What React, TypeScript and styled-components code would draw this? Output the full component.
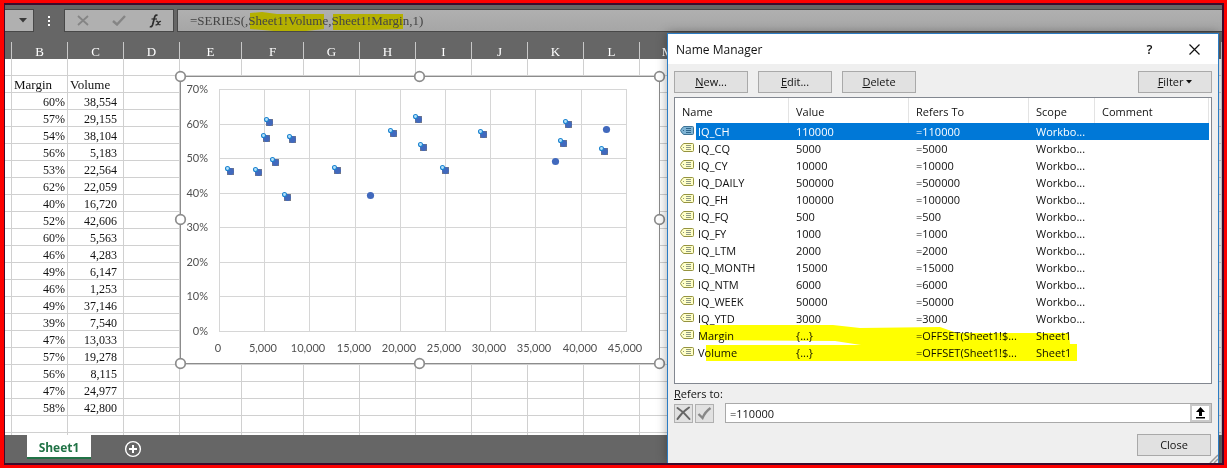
import React, { useState } from "react";
import styled, { createGlobalStyle } from "styled-components";

const ui = `"Open Sans", "Noto Sans", sans-serif`;
const serif = `"Liberation Serif", "Times New Roman", serif`;

const GlobalStyle = createGlobalStyle`
  *, *::before, *::after { box-sizing: border-box; }
  body { margin: 0; background: #fd0000; }
  button, input { font: inherit; color: inherit; margin: 0; }
`;

const Frame = styled.div`
  min-height: 100vh;
  border: solid #fd0000;
  border-width: 3px 3px 3px 4px;
  display: flex;
`;

const Workbook = styled.main`
  position: relative;
  flex: 1;
  min-width: 0;
  display: flex;
  flex-direction: column;
  overflow: hidden;
  border: solid #3d0a2c;
  border-width: 2px 2px 2px 1px;
  background: #666;
`;

const FormulaBar = styled.div`
  display: flex;
  align-items: stretch;
  height: 37px;
  padding: 4px 0 10px;
`;

const BarBox = styled.div`
  display: flex;
  align-items: center;
  border: 1px solid #484848;
  background: #b0b0b0;
`;

const NameBox = styled(BarBox)`
  width: 29px;
  border-left: 0;
`;

const BarButton = styled.button`
  flex: 1;
  display: flex;
  align-items: center;
  justify-content: center;
  height: 100%;
  padding: 0;
  border: 0;
  background: none;
`;

const NameBoxButton = styled(BarButton)`
  justify-content: flex-end;
  padding-right: 6px;
`;

const Dots = styled.div`
  width: 30px;
  display: flex;
  align-items: center;
  justify-content: center;
`;

const Tools = styled(BarBox)`
  width: 110px;
  margin-right: 3px;
`;

const FormulaField = styled(BarBox)`
  position: relative;
  flex: 1;
  border-right: 0;
  background: linear-gradient(#b0b0b0, #a6a6a6);
`;

const FormulaMarks = styled.svg`
  position: absolute;
  left: 0;
  top: 0;
  pointer-events: none;
`;

const FormulaInput = styled.input`
  position: relative;
  width: 100%;
  height: 100%;
  padding: 0 12px;
  border: 0;
  outline: 0;
  background: none;
  color: #444;
  font-family: ${serif};
  font-size: 13px;
`;

const Sheet = styled.section`
  position: relative;
  flex: 1;
  overflow: hidden;
  background: #fff;
`;

const Grid = styled.table`
  width: 100%;
  table-layout: fixed;
  border-collapse: separate;
  border-spacing: 0;
  font-family: ${serif};
  font-size: 12px;
  line-height: 14px;
  color: #111;
`;

const Col = styled.col<{ $w?: number }>`
  width: ${(p) => (p.$w ? `${p.$w}px` : "auto")};
`;

const Letter = styled.th`
  height: 17px;
  padding: 2px 0 0;
  border-right: 1px solid #c8c8c8;
  background: #666;
  color: #fff;
  font-size: 13px;
  font-weight: 400;
  line-height: 15px;
  text-align: center;
`;

const Cell = styled.td<{ $pad?: number; $head?: boolean }>`
  height: 17px;
  padding: 2px ${(p) => p.$pad ?? 2}px 0 2px;
  border: solid #d0d0d0;
  border-width: 0 1px 1px 0;
  font-size: ${(p) => (p.$head ? 13 : 12)}px;
  text-align: ${(p) => (p.$head ? "left" : "right")};
  white-space: nowrap;
`;

const CutCell = styled.td`
  height: 2px;
  padding: 0;
  border-right: 1px solid #d0d0d0;
`;

const ChartSvg = styled.svg`
  position: absolute;
  left: 169px;
  top: 28px;
  font-family: Lato, sans-serif;
  font-size: 11px;
  fill: #505050;
`;

const TabBar = styled.nav`
  display: flex;
  align-items: flex-start;
  height: 28px;
  padding-left: 22px;
  gap: 33px;
`;

const SheetTab = styled.button`
  width: 64px;
  height: 24px;
  padding: 3px 0 0;
  border: 0;
  border-bottom: 2px solid #217346;
  background: #fff;
  color: #217346;
  font: 700 12px/19px ${ui};
`;

const AddSheet = styled.button`
  display: flex;
  padding: 5px 0;
  border: 0;
  background: none;
`;

const Dialog = styled.section`
  position: absolute;
  right: 3px;
  top: 28px;
  bottom: 0;
  width: 552px;
  display: flex;
  flex-direction: column;
  border: solid #2b7cc4;
  border-width: 1px 1px 0;
  background: #efefef;
  box-shadow: 0 0 10px rgba(0, 0, 0, 0.35);
  font-family: ${ui};
  font-size: 11px;
  color: #111;
`;

const TitleBar = styled.header`
  display: flex;
  align-items: center;
  height: 30px;
  padding: 0 16px 0 8px;
  background: #fff;
`;

const Title = styled.h1`
  flex: 1;
  margin: 0;
  font-size: 12px;
  font-weight: 400;
`;

const TitleButton = styled.button`
  display: flex;
  align-items: center;
  justify-content: center;
  width: 15px;
  height: 20px;
  margin-left: 30px;
  padding: 0;
  border: 0;
  background: none;
  font-size: 13px;
  font-weight: 600;
`;

const DialogBody = styled.div`
  flex: 1;
  display: flex;
  flex-direction: column;
  padding: 7px 6px;
`;

const ButtonRow = styled.div`
  display: flex;
  gap: 10px;
  margin-bottom: 4px;
`;

const PushButton = styled.button<{ $end?: boolean }>`
  width: 74px;
  height: 22px;
  margin-left: ${(p) => (p.$end ? "auto" : "0")};
  padding: 0;
  border: 1px solid #a9a9a9;
  background: #e1e1e1;
  line-height: 18px;
  text-align: center;
`;

const ListBox = styled.div`
  position: relative;
  height: 287px;
  border: 1px solid #828790;
  background: #fff;
`;

const NameTable = styled.table`
  width: 534px;
  table-layout: fixed;
  border-collapse: separate;
  border-spacing: 0;
`;

const HeadCell = styled.th`
  height: 25px;
  padding: 2px 6px 0 7px;
  border-right: 1px solid #e3e3e3;
  font-weight: 400;
  text-align: left;
`;

const NameRow = styled.tr<{ $selected: boolean }>`
  color: ${(p) => (p.$selected ? "#fff" : "#111")};
  background: ${(p) =>
    p.$selected ? "linear-gradient(90deg, #fff 21px, #0078d7 21px)" : "none"};
`;

const NameCell = styled.td<{ $first?: boolean }>`
  height: 17px;
  padding: 0 6px 0 ${(p) => (p.$first ? 5 : 7)}px;
  line-height: 17px;
  white-space: nowrap;
`;

const NameLabel = styled.span`
  display: flex;
  align-items: center;
  gap: 4px;
`;

const Marker = styled.svg`
  position: absolute;
  left: 0;
  top: 0;
  mix-blend-mode: multiply;
  pointer-events: none;
`;

const FieldLabel = styled.label`
  margin-top: 1px;
  height: 18px;
  line-height: 18px;
`;

const RefRow = styled.div`
  display: flex;
  align-items: center;
  gap: 2px;
`;

const IconButton = styled.button`
  display: flex;
  align-items: center;
  justify-content: center;
  width: 19px;
  height: 19px;
  padding: 0;
  border: 1px solid #b0b0b0;
  background: #e1e1e1;
`;

const RefField = styled.div`
  flex: 1;
  display: flex;
  height: 20px;
  margin-left: 9px;
  border: 1px solid #a9a9a9;
  background: #fff;
`;

const RefInput = styled.input`
  flex: 1;
  min-width: 0;
  padding: 0 4px;
  border: 0;
  outline: 0;
  background: none;
`;

const CollapseButton = styled.button`
  display: flex;
  align-items: center;
  justify-content: center;
  width: 21px;
  padding: 0;
  border: 2px solid #c9c9c9;
  background: #fff;
`;

const Footer = styled.footer`
  display: flex;
  justify-content: flex-end;
  padding: 11px 1px 0 0;
`;

const Grip = styled.svg`
  position: absolute;
  right: 0;
  bottom: 0;
`;

const columns: [string, number?][] = [
  ["", 7], ["B", 56], ["C", 56], ["D", 56], ["E", 62], ["F", 62], ["G", 56],
  ["H", 56], ["I", 56], ["J", 56], ["K", 56], ["L", 56], ["M", 56], ["", 56],
  ["", 56], ["", 56], ["", 56], ["", 56], ["", 56], ["", 56], ["", 56],
  ["", 56], [""],
];

const sheetData: [string, string][] = [
  ["60%", "38,554"], ["57%", "29,155"], ["54%", "38,104"], ["56%", "5,183"],
  ["53%", "22,564"], ["62%", "22,059"], ["40%", "16,720"], ["52%", "42,606"],
  ["60%", "5,563"], ["46%", "4,283"], ["49%", "6,147"], ["46%", "1,253"],
  ["49%", "37,146"], ["39%", "7,540"], ["47%", "13,033"], ["57%", "19,278"],
  ["56%", "8,115"], ["47%", "24,977"], ["58%", "42,800"],
];

const gridRows: [string, string][] = [["", ""], ["Margin", "Volume"], ...sheetData, ["", ""]];

const selectedPoints: [number, number][] = [
  [230, 171], [258, 172], [269, 122], [266, 138], [292, 139], [275, 162],
  [287, 197], [337, 170], [393, 133], [418, 119], [423, 147], [445, 170],
  [483, 134], [563, 143], [568, 124], [604, 151],
];
const plainPoints: [number, number][] = [[370, 195], [606, 129], [555, 161]];
const handles: [number, number][] = [
  [180, 76], [419, 76], [659, 76], [180, 219], [659, 219], [180, 363], [419, 363], [659, 363],
];
const xLines = [219, 264, 309, 355, 400, 445, 490, 535, 581, 626];
const yLines = [89, 124, 158, 193, 227, 262, 296, 331];

const names: [string, string, string, string][] = [
  ["IQ_CH", "110000", "=110000", "Workbo..."],
  ["IQ_CQ", "5000", "=5000", "Workbo..."],
  ["IQ_CY", "10000", "=10000", "Workbo..."],
  ["IQ_DAILY", "500000", "=500000", "Workbo..."],
  ["IQ_FH", "100000", "=100000", "Workbo..."],
  ["IQ_FQ", "500", "=500", "Workbo..."],
  ["IQ_FY", "1000", "=1000", "Workbo..."],
  ["IQ_LTM", "2000", "=2000", "Workbo..."],
  ["IQ_MONTH", "15000", "=15000", "Workbo..."],
  ["IQ_NTM", "6000", "=6000", "Workbo..."],
  ["IQ_WEEK", "50000", "=50000", "Workbo..."],
  ["IQ_YTD", "3000", "=3000", "Workbo..."],
  ["Margin", "{...}", "=OFFSET(Sheet1!$...", "Sheet1"],
  ["Volume", "{...}", "=OFFSET(Sheet1!$...", "Sheet1"],
];

function Chart() {
  return (
    <ChartSvg width="493" height="300" viewBox="174 70 493 300" role="img" aria-label="Margin by volume">
      <rect x="180.5" y="76.5" width="479" height="287" fill="#fff" stroke="#8c8c8c" />
      <g stroke="#d6d6d6" shapeRendering="crispEdges">
        {xLines.map((x) => <line key={x} x1={x + 0.5} x2={x + 0.5} y1="89" y2="332" />)}
        {yLines.map((y) => <line key={y} x1="219" x2="627" y1={y + 0.5} y2={y + 0.5} />)}
      </g>
      {yLines.map((y, i) => (
        <text key={y} x="208" y={y + 4} textAnchor="end">{`${70 - i * 10}%`}</text>
      ))}
      {xLines.map((x, i) => (
        <text key={x} x={x - 1} y="352" textAnchor="middle">{(i * 5000).toLocaleString("en-US")}</text>
      ))}
      {selectedPoints.map(([x, y]) => (
        <g key={`${x}-${y}`}>
          <rect x={x - 3} y={y - 3} width="7" height="7" fill="#7b7b80" />
          <circle cx={x + 0.5} cy={y + 0.5} r="3.4" fill="#4169bd" />
          <circle cx={x - 2.5} cy={y - 2.5} r="2" fill="#b5e2fb" stroke="#1c83cf" strokeWidth="1.1" />
        </g>
      ))}
      {plainPoints.map(([x, y]) => (
        <circle key={x} cx={x + 0.5} cy={y + 0.5} r="3.6" fill="#4169bd" />
      ))}
      {handles.map(([x, y]) => (
        <circle key={`${x}-${y}`} cx={x + 0.5} cy={y + 0.5} r="4.8" fill="#fff" stroke="#8c8c8c" strokeWidth="1.7" />
      ))}
    </ChartSvg>
  );
}

function TagIcon({ selected }: { selected: boolean }) {
  return (
    <svg width="14" height="11" viewBox="0 0 14 11">
      <path
        d="M4 .5H12.5Q13.5 .5 13.5 1.5V7.5Q13.5 8.5 12.5 8.5H4Q2.500 8.500 .5 4.5Q2.500 .5 4 .5Z"
        fill={selected ? "#7fb4d4" : "#ffffc8"}
        stroke={selected ? "#3d7396" : "#95933f"}
      />
      <path
        d="M6 2.5H11M6 4.5H11M6 6.5H11M3 4.5H4"
        stroke={selected ? "#2f668c" : "#8f9a84"}
        shapeRendering="crispEdges"
      />
    </svg>
  );
}

export default function App() {
  const [formula, setFormula] = useState("=SERIES(,Sheet1!Volume,Sheet1!Margin,1)");
  const [reference, setReference] = useState("=110000");
  const [selected, setSelected] = useState(0);

  return (
    <>
      <GlobalStyle />
      <Frame>
        <Workbook>
          <FormulaBar>
            <NameBox>
              <NameBoxButton aria-label="Name box list">
                <svg width="8" height="5"><path d="M0 0H8L4 4.5Z" fill="#3a3a3a" /></svg>
              </NameBoxButton>
            </NameBox>
            <Dots>
              <svg width="2" height="10"><path d="M0 0h2v2H0zM0 4h2v2H0zM0 8h2v2H0z" fill="#fff" /></svg>
            </Dots>
            <Tools>
              <BarButton aria-label="Cancel">
                <svg width="12" height="11" viewBox="0 0 12 11"><path d="M1 1L11 10M11 1L1 10" stroke="#858585" strokeWidth="1.8" /></svg>
              </BarButton>
              <BarButton aria-label="Enter">
                <svg width="14" height="11" viewBox="0 0 14 11"><path d="M1 6L5 9.5L13 1" fill="none" stroke="#858585" strokeWidth="2.4" /></svg>
              </BarButton>
              <BarButton aria-label="Insert function">
                <svg width="13" height="14" viewBox="0 0 13 14" fill="none" stroke="#2c2c2c">
                  <path d="M8.5 1.5Q6.5 0 5.500 3.5L3.7 10.5Q2.8 13.5 .8 12.5" strokeWidth="1.7" />
                  <path d="M2.5 5H8" strokeWidth="1.2" />
                  <path d="M7 7.5Q8.5 6.5 9 8.5Q9.5 11.5 11.5 10.5M12 7.5Q10.5 7 9 9.5Q8 11.5 6.5 10.8" strokeWidth="1.2" />
                </svg>
              </BarButton>
            </Tools>
            <FormulaField>
              <FormulaMarks width="240" height="21">
                <path d="M72 3L84 2L99 4H146V19L128 21H96L72 19ZM155 4H225V19L190 20H155Z" fill="#b4b000" />
              </FormulaMarks>
              <FormulaInput aria-label="Formula" value={formula} onChange={(e) => setFormula(e.target.value)} />
            </FormulaField>
          </FormulaBar>

          <Sheet>
            <Grid>
              <colgroup>{columns.map(([, w], i) => <Col key={i} $w={w} />)}</colgroup>
              <thead>
                <tr>{columns.map(([name], i) => <Letter key={i} scope="col">{name}</Letter>)}</tr>
              </thead>
              <tbody>
                {gridRows.map(([margin, volume], r) => (
                  <tr key={r}>
                    {columns.map((_, c) => (
                      <Cell key={c} $head={r === 1} $pad={c === 2 ? 6 : 2}>
                        {c === 1 ? margin : c === 2 ? volume : null}
                      </Cell>
                    ))}
                  </tr>
                ))}
                <tr>{columns.map((_, c) => <CutCell key={c} />)}</tr>
              </tbody>
            </Grid>
            <Chart />
          </Sheet>

          <TabBar>
            <SheetTab>Sheet1</SheetTab>
            <AddSheet aria-label="New sheet">
              <svg width="18" height="18" viewBox="0 0 18 18" fill="none" stroke="#fff">
                <circle cx="9" cy="9" r="7.4" strokeWidth="1.4" />
                <path d="M9 5V13M5 9H13" strokeWidth="2" />
              </svg>
            </AddSheet>
          </TabBar>

          <Dialog role="dialog" aria-labelledby="dialog-title">
            <TitleBar>
              <Title id="dialog-title">Name Manager</Title>
              <TitleButton aria-label="Help">?</TitleButton>
              <TitleButton aria-label="Close window">
                <svg width="11" height="11" viewBox="0 0 11 11"><path d="M.5 .5L10.5 10.5M10.5 .5L.5 10.5" stroke="#111" strokeWidth="1.2" /></svg>
              </TitleButton>
            </TitleBar>
            <DialogBody>
              <ButtonRow>
                <PushButton><u>N</u>ew...</PushButton>
                <PushButton><u>E</u>dit...</PushButton>
                <PushButton><u>D</u>elete</PushButton>
                <PushButton $end>
                  <u>F</u>ilter <svg width="6" height="7"><path d="M0 1H6L3 4.5Z" fill="#111" /></svg>
                </PushButton>
              </ButtonRow>
              <ListBox>
                <NameTable>
                  <colgroup><Col $w={114} /><Col $w={120} /><Col $w={120} /><Col $w={66} /><Col /></colgroup>
                  <thead>
                    <tr>
                      {["Name", "Value", "Refers To", "Scope", "Comment"].map((h) => (
                        <HeadCell key={h} scope="col">{h}</HeadCell>
                      ))}
                    </tr>
                  </thead>
                  <tbody>
                    {names.map(([name, value, refers, scope], i) => (
                      <NameRow key={name} $selected={i === selected} onClick={() => setSelected(i)}>
                        <NameCell $first>
                          <NameLabel><TagIcon selected={i === selected} />{name}</NameLabel>
                        </NameCell>
                        <NameCell>{value}</NameCell>
                        <NameCell>{refers}</NameCell>
                        <NameCell>{scope}</NameCell>
                        <NameCell />
                      </NameRow>
                    ))}
                  </tbody>
                </NameTable>
                <Marker width="410" height="266">
                  <path
                    d="M25 227H158L185 230L265 229L282 235H394L395 246H402V263H31V247H186L160 243L25 242Z"
                    fill="#ff0"
                  />
                </Marker>
              </ListBox>
              <FieldLabel htmlFor="reference"><u>R</u>efers to:</FieldLabel>
              <RefRow>
                <IconButton aria-label="Discard change">
                  <svg width="15" height="15" viewBox="0 0 15 15" fill="none" stroke="#666" strokeLinecap="round">
                    <path d="M1.5 2Q8 6 13.5 13" strokeWidth="2" /><path d="M13 1.5Q6 6 1.5 13" strokeWidth="2" />
                  </svg>
                </IconButton>
                <IconButton aria-label="Apply change">
                  <svg width="15" height="15" viewBox="0 0 15 15" fill="none" stroke="#888">
                    <path d="M1.5 8L5.5 12Q8 6 13.5 2" strokeWidth="2.4" />
                  </svg>
                </IconButton>
                <RefField>
                  <RefInput id="reference" value={reference} onChange={(e) => setReference(e.target.value)} />
                  <CollapseButton aria-label="Collapse dialog">
                    <svg width="9" height="12" viewBox="0 0 9 12"><path d="M4.5 0L9 5H6V9H3V5H0ZM0 10H9V11.5H0Z" fill="#000" /></svg>
                  </CollapseButton>
                </RefField>
              </RefRow>
              <Footer><PushButton>Close</PushButton></Footer>
            </DialogBody>
            <Grip width="9" height="9"><path d="M1 9L9 1M5 9L9 5" stroke="#999" strokeWidth="1.5" /></Grip>
          </Dialog>
        </Workbook>
      </Frame>
    </>
  );
}
